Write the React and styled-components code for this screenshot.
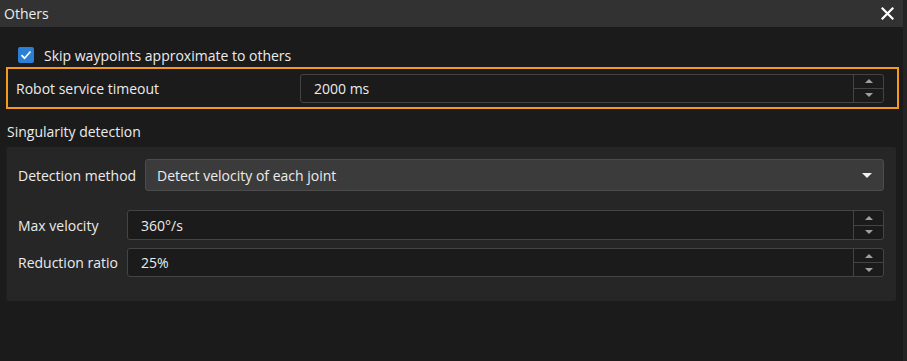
import React from "react";
import styled, { createGlobalStyle } from "styled-components";

const GlobalStyle = createGlobalStyle`
  body {
    margin: 0;
    background: #1b1b1b;
    font-family: "Open Sans", "Noto Sans", sans-serif;
    color: #ececec;
  }
`;

const Window = styled.div`
  width: 907px;
  height: 361px;
  display: flex;
  overflow: hidden;
  background: #1b1b1b;
`;

const Main = styled.div`
  flex: 1;
  display: flex;
  flex-direction: column;
`;

const Track = styled.div`
  width: 4px;
  background: #242424;
`;

const TitleBar = styled.div`
  height: 27px;
  background: #323232;
  display: flex;
  align-items: center;
  justify-content: space-between;
  padding: 0 9px 0 4px;
  font-size: 14px;
`;

const CloseButton = styled.div`
  display: flex;
  align-items: center;
  cursor: pointer;
`;

const Body = styled.div`
  display: flex;
  flex-direction: column;
  padding: 20px 4px 0 6px;
`;

const CheckRow = styled.label`
  display: flex;
  align-items: center;
  gap: 10px;
  padding-left: 12px;
  font-size: 14px;
  height: 16px;
`;

const Box = styled.span`
  width: 16px;
  height: 16px;
  border-radius: 2px;
  background: #2b7fd4;
  display: flex;
  align-items: center;
  justify-content: center;
`;

const Highlight = styled.div`
  margin-top: 4px;
  height: 42px;
  box-sizing: border-box;
  border: 2px solid #f49a1e;
  display: flex;
  align-items: center;
  padding: 0 13px 0 8px;
  font-size: 14px;
`;

const RowLabel = styled.span`
  width: ${(p) => p.width}px;
  flex-shrink: 0;
  font-size: 14px;
  white-space: nowrap;
`;

const SpinBox = styled.div`
  flex: 1;
  height: ${(p) => p.height}px;
  box-sizing: border-box;
  border: 1px solid #444;
  border-radius: 3px;
  background: #1b1b1b;
  display: flex;
`;

const SpinText = styled.div`
  flex: 1;
  display: flex;
  align-items: center;
  padding-left: 13px;
  font-size: 14px;
`;

const SpinButtons = styled.div`
  width: 29px;
  border-left: 1px solid #444;
  display: flex;
  flex-direction: column;
`;

const SpinButton = styled.div`
  flex: 1;
  display: flex;
  align-items: center;
  justify-content: center;
  & + & {
    border-top: 1px solid #444;
  }
`;

const Arrow = styled.span`
  width: 0;
  height: 0;
  border-left: 4px solid transparent;
  border-right: 4px solid transparent;
  ${(p) =>
    p.up
      ? `border-bottom: 4px solid ${p.color || "#a0a0a0"};`
      : `border-top: 4px solid ${p.color || "#a0a0a0"};`}
`;

const SectionTitle = styled.div`
  margin-top: 12px;
  padding-left: 1px;
  font-size: 14px;
  height: 20px;
  display: flex;
  align-items: center;
`;

const Panel = styled.div`
  margin-top: 6px;
  width: 890px;
  box-sizing: border-box;
  background: #262626;
  border-left: 1px solid #202020;
  border-radius: 2px;
  padding: 12px 12px 24px 11px;
  display: flex;
  flex-direction: column;
`;

const FieldRow = styled.div`
  display: flex;
  align-items: center;
  margin-top: ${(p) => p.gap || 0}px;
`;

const Combo = styled.div`
  flex: 1;
  height: 32px;
  box-sizing: border-box;
  background: #3b3b3b;
  border: 1px solid #4c4c4c;
  border-radius: 3px;
  display: flex;
  align-items: center;
  justify-content: space-between;
  padding: 0 11px 0 11px;
  font-size: 14px;
`;

const BigArrow = styled.span`
  width: 0;
  height: 0;
  border-left: 5px solid transparent;
  border-right: 5px solid transparent;
  border-top: 5px solid #f2f2f2;
`;

function Spin({ value, height }) {
  return (
    <SpinBox height={height}>
      <SpinText>{value}</SpinText>
      <SpinButtons>
        <SpinButton>
          <Arrow up />
        </SpinButton>
        <SpinButton>
          <Arrow />
        </SpinButton>
      </SpinButtons>
    </SpinBox>
  );
}

export default function App() {
  return (
    <>
      <GlobalStyle />
      <Window>
        <Main>
          <TitleBar>
            <span>Others</span>
            <CloseButton>
              <svg width="13" height="13" viewBox="0 0 13 13">
                <path
                  d="M1.5 1.5 L11.5 11.5 M11.5 1.5 L1.5 11.5"
                  stroke="#fff"
                  strokeWidth="2.2"
                  strokeLinecap="square"
                />
              </svg>
            </CloseButton>
          </TitleBar>
          <Body>
            <CheckRow>
              <Box>
                <svg width="12" height="10" viewBox="0 0 12 10">
                  <path
                    d="M1.5 5.2 L4.5 8.2 L10.5 1.5"
                    stroke="#fff"
                    strokeWidth="1.7"
                    fill="none"
                  />
                </svg>
              </Box>
              Skip waypoints approximate to others
            </CheckRow>
            <Highlight>
              <RowLabel width={284}>Robot service timeout</RowLabel>
              <Spin value="2000 ms" height={29} />
            </Highlight>
            <SectionTitle>Singularity detection</SectionTitle>
            <Panel>
              <FieldRow>
                <RowLabel width={127}>Detection method</RowLabel>
                <Combo>
                  <span>Detect velocity of each joint</span>
                  <BigArrow />
                </Combo>
              </FieldRow>
              <FieldRow gap={19}>
                <RowLabel width={109}>Max velocity</RowLabel>
                <Spin value="360°/s" height={30} />
              </FieldRow>
              <FieldRow gap={8}>
                <RowLabel width={109}>Reduction ratio</RowLabel>
                <Spin value="25%" height={29} />
              </FieldRow>
            </Panel>
          </Body>
        </Main>
        <Track />
      </Window>
    </>
  );
}
